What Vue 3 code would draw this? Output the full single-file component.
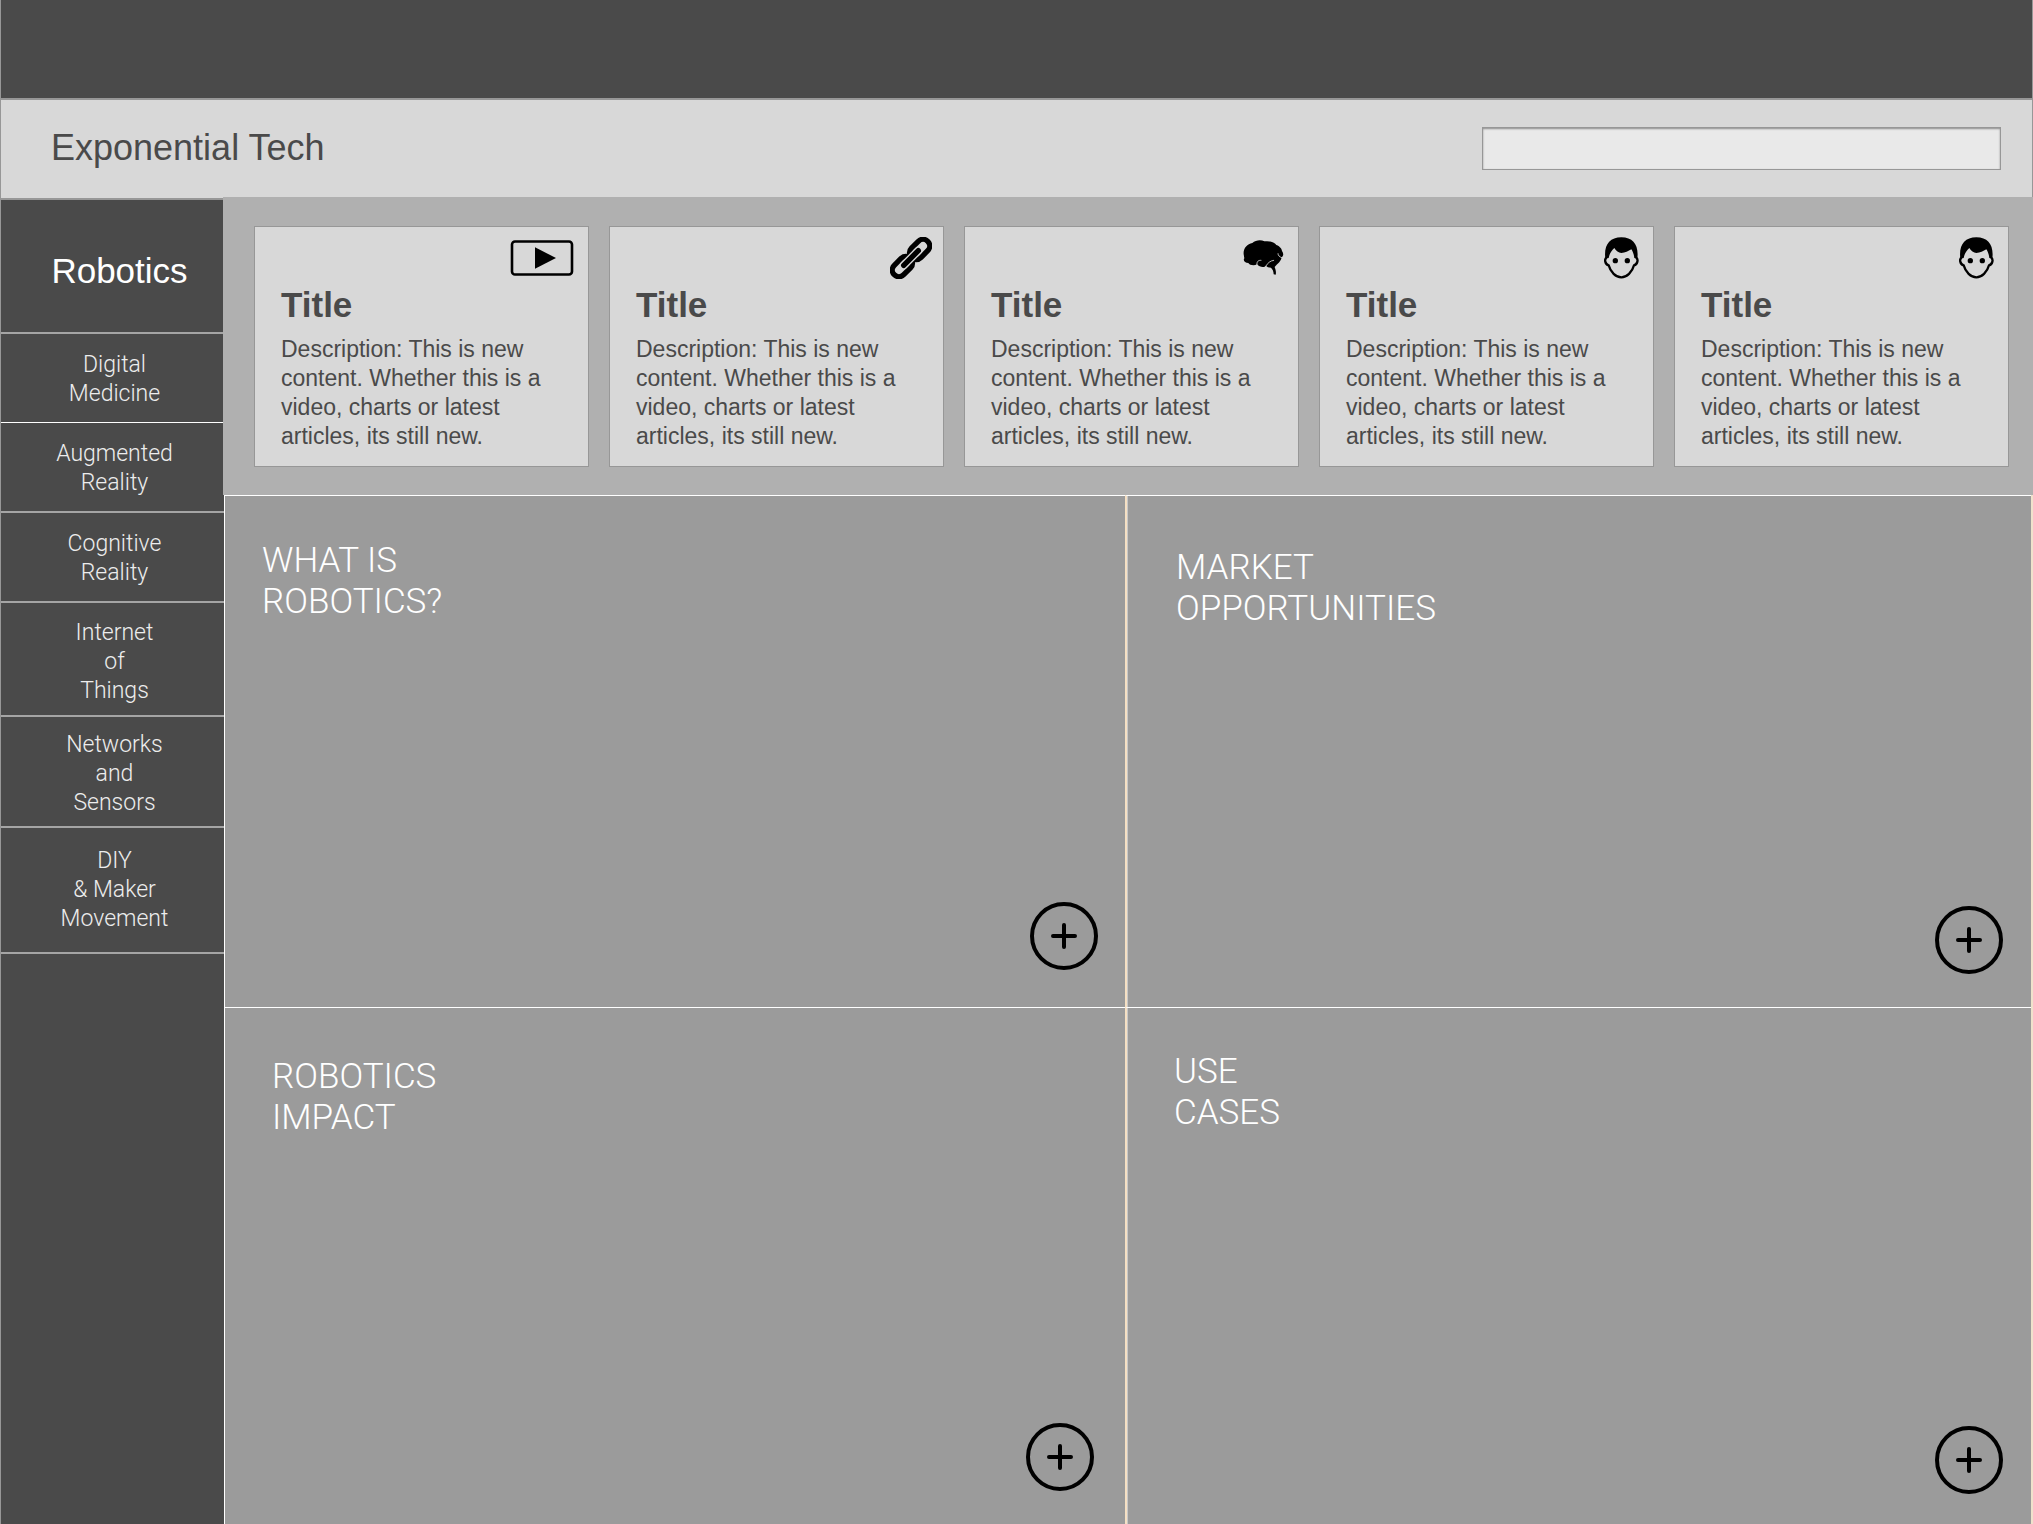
<script setup>
const topics = [
  { lines: ['Digital', 'Medicine'], size: 'short', tone: 'bright' },
  { lines: ['Augmented', 'Reality'], size: 'short' },
  { lines: ['Cognitive', 'Reality'], size: 'short' },
  { lines: ['Internet', 'of', 'Things'], size: 'medium' },
  { lines: ['Networks', 'and', 'Sensors'], size: 'compact' },
  { lines: ['DIY', '& Maker', 'Movement'], size: 'tall' }
]

const description =
  'Description: This is new content. Whether this is a video, charts or latest articles, its still new.'

const cards = ['video', 'link', 'brain', 'person', 'person']

const panels = [
  { name: 'about', lines: ['WHAT IS', 'ROBOTICS?'] },
  { name: 'market', lines: ['MARKET', 'OPPORTUNITIES'] },
  { name: 'impact', lines: ['ROBOTICS', 'IMPACT'] },
  { name: 'cases', lines: ['USE', 'CASES'] }
]
</script>

<template>
  <div class="page">
    <div class="topbar"></div>
    <header class="header">
      <h1>Exponential Tech</h1>
      <input class="search" type="search" aria-label="Search" />
    </header>

    <div class="body">
      <nav class="sidebar">
        <a class="current" href="#robotics">Robotics</a>
        <a
          v-for="topic in topics"
          :key="topic.lines.join(' ')"
          href="#topic"
          class="topic"
          :class="[topic.size, topic.tone]"
        >
          <span v-for="line in topic.lines" :key="line">{{ line }}</span>
        </a>
      </nav>

      <main class="main">
        <section class="strip">
          <article v-for="(icon, i) in cards" :key="i" class="card">
            <div class="card-icon" :class="icon">
              <svg v-if="icon === 'video'" width="64" height="36" viewBox="0 0 64 36">
                <rect x="2" y="1.5" width="60" height="33" rx="3" fill="none" stroke="#000" stroke-width="2.6" />
                <path d="M25 7.3L46 18L25 28.7Z" />
              </svg>
              <svg v-else-if="icon === 'link'" width="42" height="42" viewBox="60 38 126 126">
                <g transform="translate(123 101) rotate(-45)" fill="none" stroke="#000" stroke-width="16">
                  <rect x="2" y="-20" width="69" height="40" rx="20" />
                  <rect x="-71" y="-20" width="69" height="40" rx="20" />
                  <path d="M-31 0H31" stroke="#d8d8d8" stroke-width="24" stroke-linecap="round" />
                  <path d="M-31 0H31" stroke-linecap="round" />
                </g>
              </svg>
              <svg v-else-if="icon === 'brain'" width="41" height="35" viewBox="38 43 123 105">
                <path d="M40 86C38 68 50 56 66 52C76 43 92 42 102 47C116 45 132 48 138 58C150 62 155 72 155 76C161 84 159 92 154 95C152 108 142 114 133 124C136 132 138 140 136 147L130 146C130 136 126 130 122 126C116 126 109 123 107 120C102 126 88 125 80 116C72 121 58 119 54 112C44 112 37 104 42 98Z" />
                <g fill="none" stroke="#d8d8d8" stroke-width="2.5" stroke-linecap="round">
                  <path d="M106 122C112 112 120 105 130 104" />
                  <path d="M80 118C78 108 84 103 92 104" />
                  <path d="M143 84C143 90 147 93 154 96" />
                </g>
              </svg>
              <svg v-else width="35" height="42" viewBox="44 35 105 126">
                <path d="M52 97C44 101 47 117 58 120C63 140 80 156 96 156C112 156 129 140 134 120C145 117 148 101 140 97" fill="none" stroke="#000" stroke-width="7" />
                <path d="M48 100C43 60 60 36 96 36C132 36 149 60 144 100L135 98C134 88 131 80 126 72C117 78 107 82 96 83C88 82 80 77 75 68C66 76 60 86 58 98Z" />
                <circle cx="78" cy="106" r="8" />
                <circle cx="114" cy="106" r="8" />
              </svg>
            </div>
            <h2>Title</h2>
            <p>{{ description }}</p>
          </article>
        </section>

        <section class="panels">
          <article v-for="panel in panels" :key="panel.name" class="panel" :class="panel.name">
            <h2><span v-for="line in panel.lines" :key="line">{{ line }}</span></h2>
            <button type="button" :aria-label="'Add to ' + panel.lines.join(' ')">
              <svg width="68" height="68" viewBox="0 0 68 68" fill="none" stroke="#000" stroke-width="4">
                <circle cx="34" cy="34" r="32" />
                <path d="M23 34H45M34 23V45" stroke-linecap="round" />
              </svg>
            </button>
          </article>
        </section>
      </main>
    </div>
  </div>
</template>

<style>
body {
  margin: 0;
}
</style>

<style scoped>
* {
  box-sizing: border-box;
}
h1,
h2,
p {
  margin: 0;
}
a {
  color: inherit;
  text-decoration: none;
}
svg {
  display: block;
}
.page {
  display: flex;
  flex-direction: column;
  min-height: 100vh;
  background: #9b9b9b;
  color: #4a4a4a;
  font-family: "Liberation Sans", Arial, sans-serif;
}
.topbar {
  height: 100px;
  background: #4a4a4a;
  border: 1px solid #979797;
  border-top: 0;
  border-bottom-width: 2px;
}
.header {
  display: flex;
  align-items: center;
  justify-content: space-between;
  height: 98px;
  padding: 0 31px 2px 50px;
  background: #d8d8d8;
  border: solid #979797;
  border-width: 0 1px;
}
.header h1 {
  font-size: 36px;
  line-height: 42px;
  font-weight: 400;
}
.search {
  width: 519px;
  max-width: 50%;
  height: 43px;
  padding: 0 12px;
  font: inherit;
  font-size: 23px;
  color: inherit;
  background: #e9e9e9;
  border: 1px solid #979797;
  border-radius: 0;
  box-shadow: inset 0 1px 2px rgba(0, 0, 0, 0.4);
  appearance: none;
}
.body {
  display: flex;
  flex: 1;
}
.sidebar {
  flex: 0 0 224px;
  background: #4a4a4a;
  border-top: 2px solid #979797;
  border-left: 1px solid #979797;
}
.current,
.topic {
  display: flex;
  flex-direction: column;
  align-items: center;
  justify-content: center;
  border-bottom: 2px solid #a5a5a5;
}
.current {
  padding: 50px 0 41px 14px;
  color: #fff;
  font-size: 35px;
  line-height: 41px;
}
.topic {
  padding-left: 4px;
  color: #ededed;
  font-family: Roboto, "Liberation Sans", sans-serif;
  font-weight: 300;
  font-size: 23px;
  line-height: 29px;
}
.short {
  padding-top: 16px;
  padding-bottom: 14px;
}
.bright {
  border-bottom: 1px solid #fff;
}
.medium {
  padding-top: 15px;
  padding-bottom: 10px;
}
.compact {
  padding-top: 13px;
  padding-bottom: 9px;
}
.tall {
  padding-top: 18px;
  padding-bottom: 19px;
}
.main {
  display: flex;
  flex: 1;
  flex-direction: column;
  min-width: 0;
}
.strip {
  display: grid;
  grid-template-columns: repeat(5, minmax(0, 1fr));
  gap: 20px;
  margin: -1px 0 0 -1px;
  padding: 29px 24px 28px 31px;
  background: #b0b0b0;
}
.card {
  padding: 4px 11px 15px 26px;
  background: #d8d8d8;
  border: 1px solid #979797;
}
.card-icon {
  display: flex;
  align-items: center;
  justify-content: flex-end;
  height: 53px;
  padding-right: 3px;
}
.card-icon.link {
  padding-right: 0;
}
.card h2 {
  font-size: 35px;
  line-height: 42px;
}
.card p {
  margin-top: 9px;
  font-size: 23px;
  line-height: 29px;
}
.panels {
  display: grid;
  flex: 1;
  grid-template-columns: 901fr 906fr;
  grid-template-rows: 512fr 516fr;
  border-right: 2px solid #f0e2cc;
}
.panel {
  display: flex;
  flex-direction: column;
  justify-content: space-between;
  border-top: 1px solid #fff;
  border-left: 1px solid #fff;
}
.market,
.cases {
  border-left: 2px solid #f5e0c4;
  box-shadow: inset 1px 0 #c8c8c8;
}
.about {
  padding: 44px 27px 37px 37px;
}
.market {
  padding: 51px 28px 33px 49px;
}
.impact {
  padding: 48px 31px 33px 47px;
}
.cases {
  padding: 43px 28px 30px 47px;
}
.panel h2 {
  color: #fff;
  font-family: Roboto, "Liberation Sans", sans-serif;
  font-weight: 300;
  font-size: 35px;
  line-height: 41px;
}
.panel h2 span {
  display: block;
}
.panel button {
  align-self: flex-end;
  padding: 0;
  background: none;
  border: 0;
  cursor: pointer;
}
</style>
